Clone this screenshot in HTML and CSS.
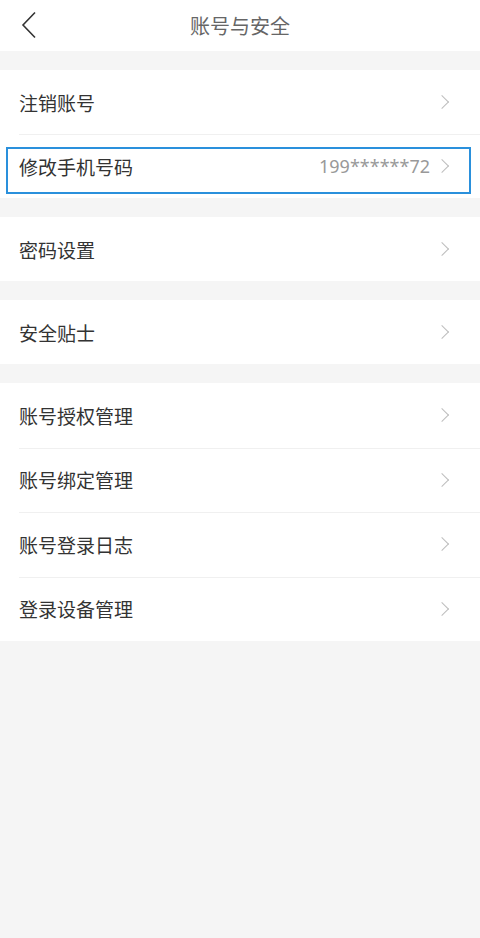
FILE: index.html
```html
<!DOCTYPE html>
<html lang="zh-CN">
<head>
<meta charset="UTF-8" />
<title>账号与安全</title>
<link rel="stylesheet" href="styles.css">
</head>
<body>

<header class="topbar">
  <a class="back" href="#">
    <svg width="16" height="28" viewBox="0 0 16 28"><path d="M14 1.5 L2 14 L14 26.5" fill="none" stroke="#333" stroke-width="1.6"/></svg>
  </a>
  <h1>账号与安全</h1>
</header>

<ul class="group">
  <li class="row"><span class="label">注销账号</span><span class="arrow"></span></li>
  <li class="row focus"><span class="label">修改手机号码</span><span class="value">199******72</span><span class="arrow"></span></li>
</ul>

<ul class="group">
  <li class="row"><span class="label">密码设置</span><span class="arrow"></span></li>
</ul>

<ul class="group">
  <li class="row"><span class="label">安全贴士</span><span class="arrow"></span></li>
</ul>

<ul class="group">
  <li class="row"><span class="label">账号授权管理</span><span class="arrow"></span></li>
  <li class="row"><span class="label">账号绑定管理</span><span class="arrow"></span></li>
  <li class="row"><span class="label">账号登录日志</span><span class="arrow"></span></li>
  <li class="row"><span class="label">登录设备管理</span><span class="arrow"></span></li>
</ul>

</body>
</html>
```

FILE: styles.css
```css
@charset "utf-8";

html, body {
    height: 100%;
}

body {
    margin: 0;
    background: #f5f5f5;
    font-family: "Noto Sans CJK SC", "Liberation Sans", sans-serif;
    color: #333333;
}

.topbar {
    height: 51px;
    background: #ffffff;
    display: flex;
    align-items: center;
    justify-content: center;
    position: relative;
    margin-bottom: 19px;
}

.topbar h1 {
    margin: 0;
    font-size: 20px;
    font-weight: normal;
    color: #666666;
}

.back {
    position: absolute;
    left: 21px;
    top: 11px;
    display: flex;
}

.group {
    list-style: none;
    margin: 0 0 19px 0;
    padding: 0;
    background: #ffffff;
}

.row {
    height: 64px;
    display: flex;
    align-items: center;
    padding: 0 30px 0 19px;
    position: relative;
}

.row + .row::before {
    content: "";
    position: absolute;
    left: 19px;
    right: 0;
    top: 0;
    border-top: 1px solid #f0f0f0;
}

.group:last-child .row {
    height: 64.5px;
}

.label {
    flex: 1;
    font-size: 19px;
}

.value {
    font-family: "Noto Sans", sans-serif;
    font-size: 18px;
    color: #999999;
    margin-right: 7px;
}

.arrow {
    width: 9px;
    height: 9px;
    border-top: 1.5px solid #bdbdbd;
    border-right: 1.5px solid #bdbdbd;
    transform: rotate(45deg);
    margin-right: 3px;
}

.focus::after {
    content: "";
    position: absolute;
    left: 6px;
    right: 9px;
    top: 13px;
    bottom: 4px;
    border: 2px solid #2a90dc;
}
```
